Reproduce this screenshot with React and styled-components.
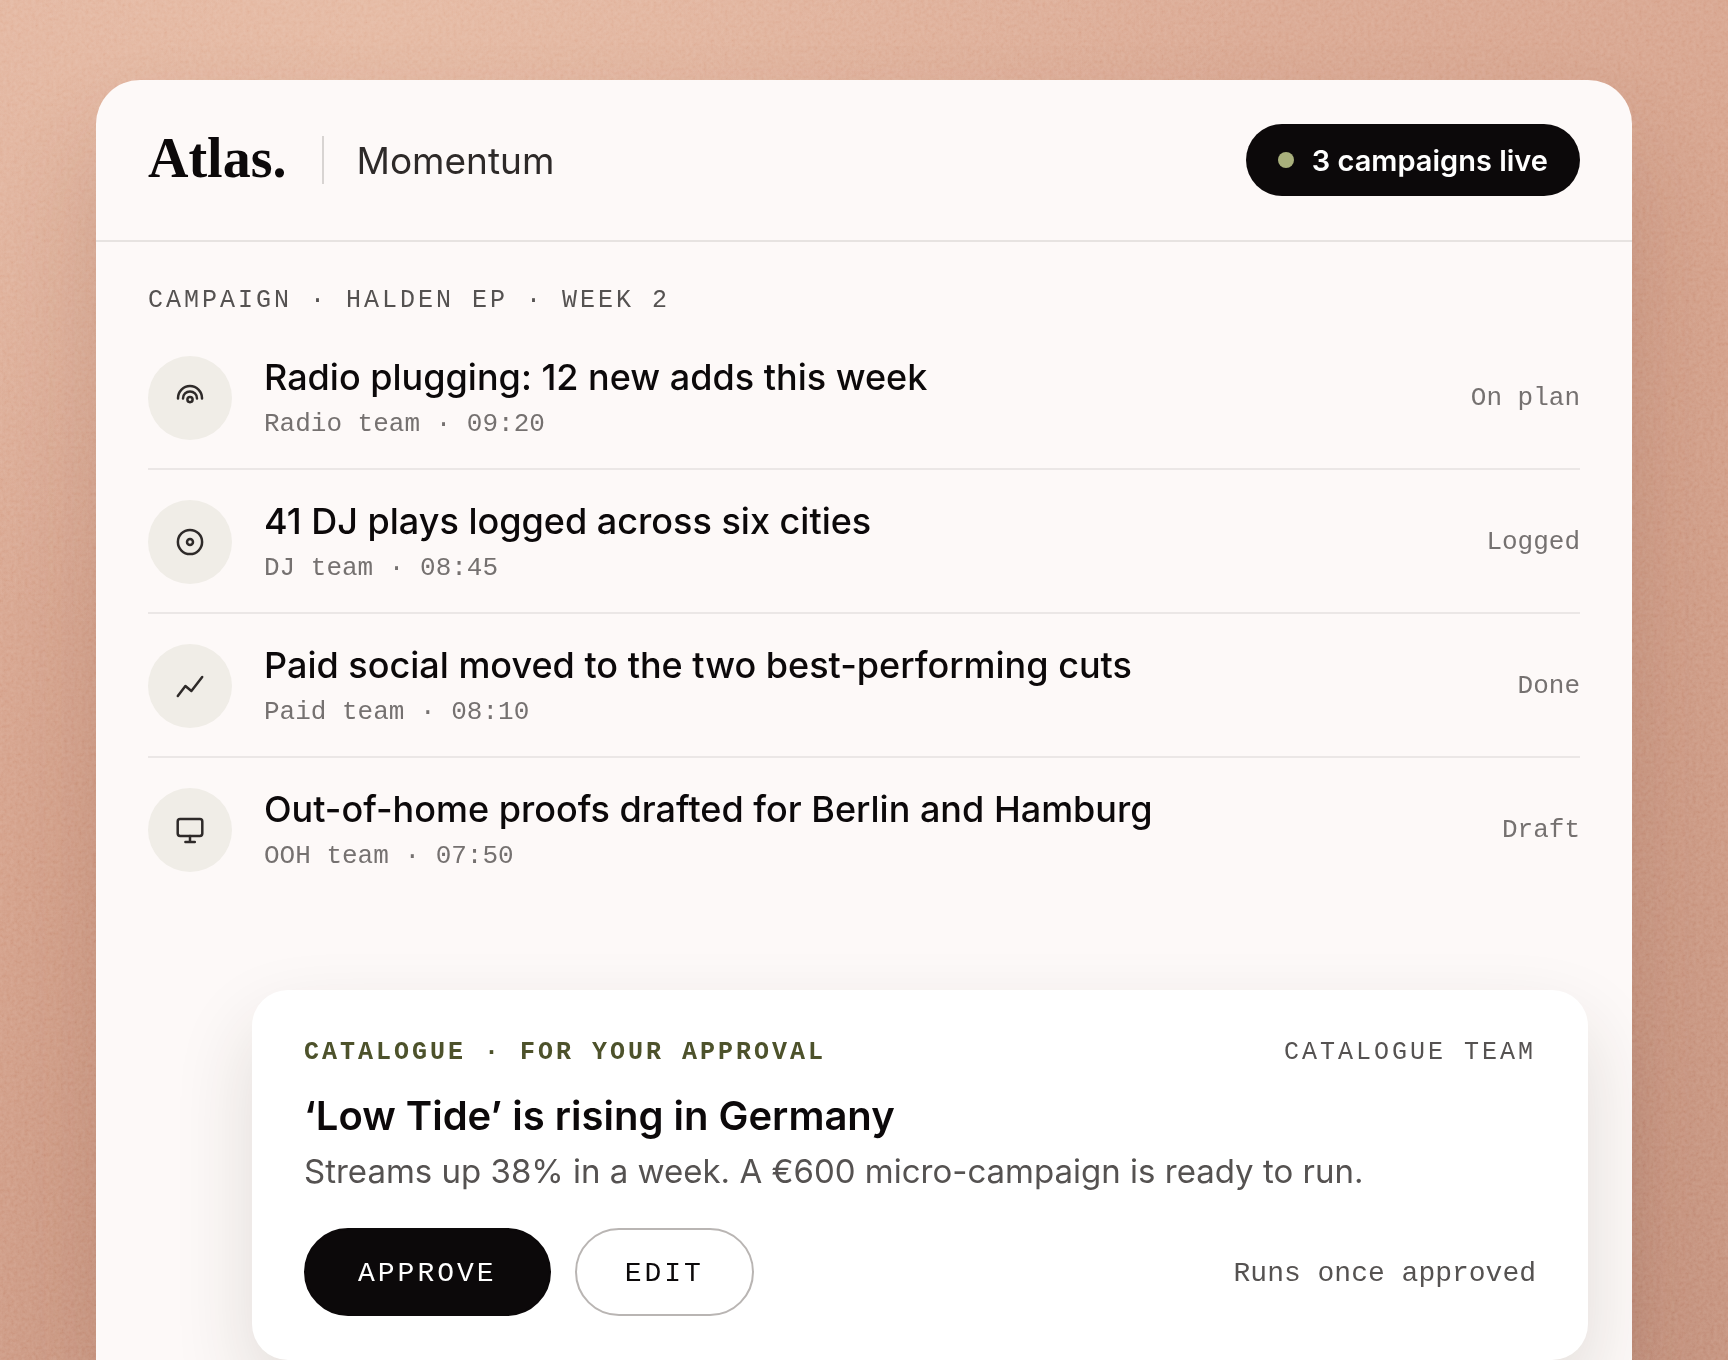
import React from 'react';
import styled, { createGlobalStyle } from 'styled-components';

const GlobalStyle = createGlobalStyle`
  *, *::before, *::after {
    box-sizing: border-box;
  }

  body {
    margin: 0;
    background: #cc9881;
    font-family: "Inter", "Liberation Sans", sans-serif;
    color: #0c090a;
  }

  h1, h2, h3, p, ul {
    margin: 0;
    padding: 0;
    font-weight: inherit;
  }
`;

const mono = '"Liberation Mono", "DejaVu Sans Mono", monospace';

const RadioIcon = () => (
  <Glyph viewBox="0 0 32 32" aria-hidden="true">
    <path d="M4 16.4V16a12 12 0 0 1 24 0v.4" />
    <path d="M9 16.4a7 7 0 0 1 14 0" />
    <circle cx="16" cy="17.6" r="2.6" />
  </Glyph>
);

const DiscIcon = () => (
  <Glyph viewBox="0 0 32 32" aria-hidden="true">
    <circle cx="16" cy="16" r="12.1" />
    <circle cx="16" cy="16" r="3" />
  </Glyph>
);

const TrendIcon = () => (
  <Glyph viewBox="0 0 32 32" aria-hidden="true">
    <path d="M3.8 26l7.6-10 6 5L28.2 7" />
  </Glyph>
);

const ScreenIcon = () => (
  <Glyph viewBox="0 0 32 32" aria-hidden="true">
    <rect x="3.7" y="5" width="24.6" height="17" rx="2.4" />
    <path d="M16 22v6M11.4 28h9.4" />
  </Glyph>
);

const activity = [
  { id: 'radio', icon: RadioIcon, title: 'Radio plugging: 12 new adds this week', meta: 'Radio team · 09:20', status: 'On plan' },
  { id: 'dj', icon: DiscIcon, title: '41 DJ plays logged across six cities', meta: 'DJ team · 08:45', status: 'Logged' },
  { id: 'paid', icon: TrendIcon, title: 'Paid social moved to the two best-performing cuts', meta: 'Paid team · 08:10', status: 'Done' },
  { id: 'ooh', icon: ScreenIcon, title: 'Out-of-home proofs drafted for Berlin and Hamburg', meta: 'OOH team · 07:50', status: 'Draft' },
];

// Fine paper grain laid over the page gradient
const PaperGrain = () => (
  <Grain aria-hidden="true">
    <filter id="grain">
      <feTurbulence type="fractalNoise" baseFrequency="0.28" numOctaves="3" seed="4" />
      <feColorMatrix type="matrix" values="1 0 0 0 0  1 0 0 0 0  1 0 0 0 0  0 0 0 0 1" />
    </filter>
    <rect width="100%" height="100%" filter="url(#grain)" />
  </Grain>
);

const ActivityRow = ({ icon: Icon, title, meta, status }) => (
  <Row>
    <IconDisc><Icon /></IconDisc>
    <RowText>
      <RowTitle>{title}</RowTitle>
      <RowMeta>{meta}</RowMeta>
    </RowText>
    <Status>{status}</Status>
  </Row>
);

const App = () => {
  return (
    <>
      <GlobalStyle />
      <Page>
        <PaperGrain />
        <Panel>
          <Header>
            <Brand>Atlas.</Brand>
            <Divider />
            <Product>Momentum</Product>
            <LivePill><Dot />3 campaigns live</LivePill>
          </Header>

          <Feed>
            <Eyebrow as="h2">CAMPAIGN · HALDEN EP · WEEK 2</Eyebrow>
            <List>
              {activity.map(({ id, ...item }) => (
                <ActivityRow key={id} {...item} />
              ))}
            </List>
          </Feed>

          <Approval>
            <CardTop>
              <Eyebrow $accent>CATALOGUE · FOR YOUR APPROVAL</Eyebrow>
              <Eyebrow>CATALOGUE TEAM</Eyebrow>
            </CardTop>
            <CardTitle>‘Low Tide’ is rising in Germany</CardTitle>
            <CardText>Streams up 38% in a week. A €600 micro-campaign is ready to run.</CardText>
            <Actions>
              <Button type="button" $primary>APPROVE</Button>
              <Button type="button">EDIT</Button>
              <Note>Runs once approved</Note>
            </Actions>
          </Approval>
        </Panel>
      </Page>
    </>
  );
};

const Page = styled.div`
  position: relative;
  display: flex;
  flex-direction: column;
  min-height: 100vh;
  padding: 80px 96px 0;
  overflow: hidden;
  background:
    radial-gradient(ellipse 50% 50% at 22% 0%, rgba(232, 190, 166, 0.6), rgba(232, 190, 166, 0)),
    linear-gradient(160deg, #e0b09a 0%, #d39e87 45%, #c4907b 100%);
`;

const Grain = styled.svg`
  position: absolute;
  inset: 0;
  width: 100%;
  height: 100%;
  opacity: 0.34;
  mix-blend-mode: soft-light;
  pointer-events: none;
`;

const Panel = styled.main`
  position: relative;
  flex: 1;
  background: #fdf9f8;
  border-radius: 44px 44px 0 0;
  box-shadow: 0 60px 100px rgba(90, 40, 25, 0.16);
`;

const Header = styled.header`
  display: flex;
  align-items: center;
  padding: 44px 52px;
  border-bottom: 2px solid #e7e3e1;
`;

const Brand = styled.h1`
  padding-bottom: 4px;
  font-family: "Liberation Serif", serif;
  font-size: 56px;
  font-weight: 700;
  line-height: 60px;
`;

const Divider = styled.span`
  width: 2px;
  height: 48px;
  margin: 0 32px 0 36px;
  background: #d8d4d2;
`;

const Product = styled.span`
  padding-top: 2px;
  font-size: 37px;
  line-height: 48px;
  color: #2e2a29;
`;

const LivePill = styled.span`
  display: flex;
  align-items: center;
  gap: 18px;
  height: 72px;
  margin-left: auto;
  padding: 0 32px;
  border-radius: 36px;
  background: #0c090a;
  color: #ffffff;
  font-size: 29px;
  font-weight: 600;
`;

const Dot = styled.span`
  width: 16px;
  height: 16px;
  border-radius: 50%;
  background: #a9b07c;
`;

const Feed = styled.section`
  padding: 42px 52px 0;
`;

const Eyebrow = styled.p`
  font-family: ${mono};
  font-size: 25px;
  line-height: 34px;
  letter-spacing: 3px;
  font-weight: ${({ $accent }) => ($accent ? 700 : 400)};
  color: ${({ $accent }) => ($accent ? '#4d522b' : '#555251')};
`;

const List = styled.ul`
  list-style: none;
  padding-top: 8px;
`;

const Row = styled.li`
  display: flex;
  align-items: center;
  gap: 32px;
  padding: 30px 0 28px;

  & + & {
    border-top: 2px solid #ebe7e6;
  }
`;

const IconDisc = styled.span`
  display: grid;
  place-items: center;
  width: 84px;
  height: 84px;
  border-radius: 50%;
  background: #f0ede7;
`;

const Glyph = styled.svg`
  width: 32px;
  height: 32px;
  fill: none;
  stroke: #2e2a29;
  stroke-width: 2.5;
  stroke-linecap: round;
  stroke-linejoin: round;
`;

const RowText = styled.div`
  flex: 1;
  display: flex;
  flex-direction: column;
  gap: 10px;
`;

const RowTitle = styled.h3`
  font-size: 36px;
  font-weight: 500;
  line-height: 42px;
`;

const RowMeta = styled.p`
  font-family: ${mono};
  font-size: 26px;
  line-height: 32px;
  color: #757170;
`;

const Status = styled.span`
  font-family: ${mono};
  font-size: 26px;
  line-height: 32px;
  color: #757170;
`;

const Approval = styled.section`
  margin: 90px 44px 0 156px;
  padding: 46px 52px 44px;
  border-radius: 36px;
  background: #ffffff;
  box-shadow: 0 36px 80px rgba(50, 40, 20, 0.14);
`;

const CardTop = styled.div`
  display: flex;
  justify-content: space-between;
`;

const CardTitle = styled.h2`
  margin-top: 20px;
  font-size: 40px;
  font-weight: 600;
  line-height: 52px;
`;

const CardText = styled.p`
  margin-top: 8px;
  font-size: 33px;
  line-height: 42px;
  color: #555251;
`;

const Actions = styled.div`
  display: flex;
  align-items: center;
  gap: 24px;
  margin-top: 36px;
`;

const Button = styled.button`
  height: 88px;
  padding: 2px ${({ $primary }) => ($primary ? '52px' : '48px')} 0;
  border: 2px solid ${({ $primary }) => ($primary ? '#0c090a' : '#b9b5b3')};
  border-radius: 44px;
  background: ${({ $primary }) => ($primary ? '#0c090a' : '#ffffff')};
  color: ${({ $primary }) => ($primary ? '#ffffff' : '#0c090a')};
  font-family: ${mono};
  font-size: 28px;
  letter-spacing: 3px;
  cursor: pointer;
`;

const Note = styled.span`
  margin-left: auto;
  padding-top: 2px;
  font-family: ${mono};
  font-size: 28px;
  color: #555251;
`;

export default App;
